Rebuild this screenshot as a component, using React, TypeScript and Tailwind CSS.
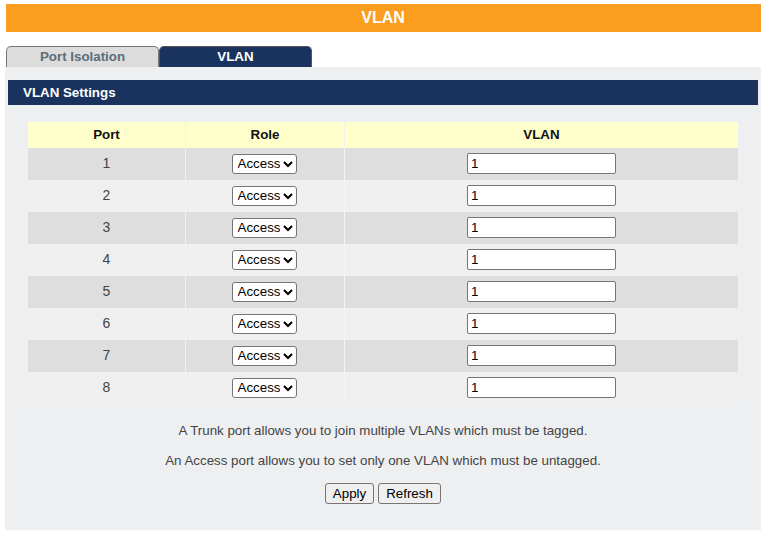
const ports = [1, 2, 3, 4, 5, 6, 7, 8];

export default function App() {
  return (
    <div className="w-[771px] h-[541px] bg-white pt-1 pl-[5px] pr-[10px] font-['Liberation_Sans',Arial,sans-serif] overflow-hidden">
      <div className="ml-px h-7 bg-[#fb9d1f] flex items-center justify-center text-white font-bold text-base pr-px pb-px">VLAN</div>
      <div className="flex ml-px mt-[14px] h-[21px]">
        <div className="w-[153px] box-border border border-b-0 border-[#777] rounded-t-[5px] bg-[#dcdcdc] text-[#5a6f7a] font-bold text-[13.33px] flex items-center justify-center pb-px">Port Isolation</div>
        <div className="w-[153px] box-border border border-b-0 border-[#555] rounded-t-[5px] bg-[#19335e] text-white font-bold text-[13.33px] flex items-center justify-center pb-px">VLAN</div>
      </div>
      <div className="h-[463px] bg-[#eeeff1] pt-[13px] px-[3px]">
        <div className="h-[25px] bg-[#19335e] text-white font-bold text-[13.33px] flex items-center pl-[15px]">VLAN Settings</div>
        <div className="mx-5 mt-[17px]">
          <div className="flex h-[26px] bg-[#ffffcc] text-[#111] font-bold text-[13.33px]">
            <div className="w-[158px] border-r border-[#f3f3f3] flex items-center justify-center pb-px">Port</div>
            <div className="w-[159px] border-r border-[#f3f3f3] flex items-center justify-center pb-px">Role</div>
            <div className="flex-1 flex items-center justify-center pb-px">VLAN</div>
          </div>
          {ports.map((p) => (
            <div key={p} className={`flex h-8 text-sm text-[#444] ${p % 2 === 1 ? "bg-[#dedede]" : "bg-[#efefef]"}`}>
              <div className="w-[158px] border-r border-[#f3f3f3] flex items-center justify-center pb-[2px]">{p}</div>
              <div className="w-[159px] border-r border-[#f3f3f3] flex items-center justify-center pb-px pr-0.5">
                <select defaultValue="Access" className="appearance-auto w-[65px] h-5 p-0 pl-px bg-white border border-[#767676] rounded-[3px] text-[13.33px] text-black">
                  <option>Access</option>
                  <option>Trunk</option>
                </select>
              </div>
              <div className="flex-1 flex items-center justify-center pb-px">
                <input defaultValue="1" className="w-[149px] h-[21px] box-border bg-white border border-[#767676] rounded-[2px] px-[3px] text-[13.33px] text-black" />
              </div>
            </div>
          ))}
        </div>
        <p className="mt-[19px] text-center text-[#444] text-[13.33px] leading-4">A Trunk port allows you to join multiple VLANs which must be tagged.</p>
        <p className="mt-[14px] text-center text-[#444] text-[13.33px] leading-4">An Access port allows you to set only one VLAN which must be untagged.</p>
        <div className="mt-[14px] flex justify-center gap-1">
          <button className="w-[49px] h-[21px] pb-px bg-[#efefef] border border-[#767676] rounded-[3px] text-[13.33px] text-black">Apply</button>
          <button className="w-[63px] h-[21px] pb-px bg-[#efefef] border border-[#767676] rounded-[3px] text-[13.33px] text-black">Refresh</button>
        </div>
      </div>
    </div>
  );
}
